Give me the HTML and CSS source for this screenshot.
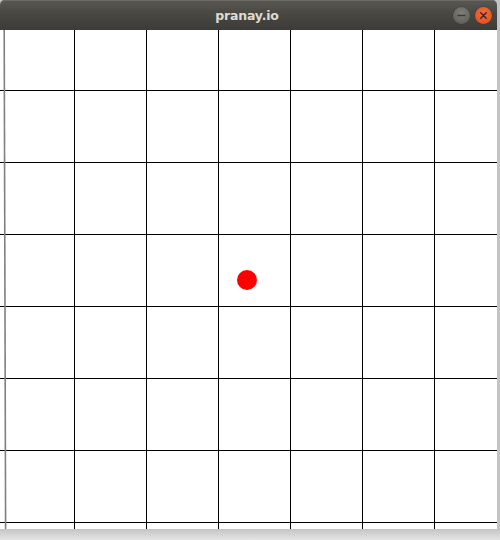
FILE: index.html
```html
<!DOCTYPE html>
<html>
<head>
<meta charset="utf-8">
<link rel="stylesheet" href="styles.css">
</head>
<body>
<div class="window">
  <div class="titlebar">
    <span class="title">pranay.io</span>
    <div class="buttons">
      <span class="btn btn-min"><svg width="17" height="17" viewBox="0 0 17 17"><line x1="4.5" y1="8.5" x2="12.5" y2="8.5" stroke="#3a3a38" stroke-width="1.4"/></svg></span>
      <span class="btn btn-close"><svg width="17" height="17" viewBox="0 0 17 17"><path d="M5.8 5.8 L11.2 11.2 M11.2 5.8 L5.8 11.2" stroke="#3a2a22" stroke-width="1.5" stroke-linecap="round"/></svg></span>
    </div>
  </div>
  <div class="canvas">
    <svg class="grid" width="497" height="499" viewBox="0 0 497 499">
      <g stroke="#000" stroke-width="1">
        <line x1="74.5" y1="0" x2="74.5" y2="499"/>
        <line x1="146.5" y1="0" x2="146.5" y2="499"/>
        <line x1="218.5" y1="0" x2="218.5" y2="499"/>
        <line x1="290.5" y1="0" x2="290.5" y2="499"/>
        <line x1="362.5" y1="0" x2="362.5" y2="499"/>
        <line x1="434.5" y1="0" x2="434.5" y2="499"/>
        <line x1="0" y1="60.5" x2="497" y2="60.5"/>
        <line x1="0" y1="132.5" x2="497" y2="132.5"/>
        <line x1="0" y1="204.5" x2="497" y2="204.5"/>
        <line x1="0" y1="276.5" x2="497" y2="276.5"/>
        <line x1="0" y1="348.5" x2="497" y2="348.5"/>
        <line x1="0" y1="420.5" x2="497" y2="420.5"/>
        <line x1="0" y1="492.5" x2="497" y2="492.5"/>
      </g>
      <line x1="4.2" y1="0" x2="5.6" y2="499" stroke="#808080" stroke-width="1.6"/>
      <circle cx="247" cy="250" r="10" fill="#ff0000"/>
    </svg>
  </div>
</div>
</body>
</html>
```
FILE: styles.css
```css
html, body {
  margin: 0;
  padding: 0;
}
body {
  width: 500px;
  height: 540px;
  overflow: hidden;
  background: linear-gradient(to bottom, #c4c4c4 0px, #c4c4c4 529px, #d6d6d6 535px, #e4e4e4 540px);
}
.window {
  width: 497px;
  display: flex;
  flex-direction: column;
}
.titlebar {
  height: 30px;
  display: flex;
  align-items: center;
  justify-content: center;
  position: relative;
  background: linear-gradient(to bottom, #595852 0%, #4a4944 40%, #3c3b37 100%);
  border-radius: 5px 5px 0 0;
  box-shadow: inset 0 1px 0 #6a6964;
}
.title {
  font-family: "DejaVu Sans", sans-serif;
  font-weight: bold;
  font-size: 12.5px;
  color: #dfdbd2;
  letter-spacing: -0.2px;
  margin-left: -3px;
}
.buttons {
  position: absolute;
  right: 5px;
  top: 7px;
  display: flex;
  gap: 5px;
}
.btn {
  width: 17px;
  height: 17px;
  border-radius: 50%;
  display: block;
}
.btn svg {
  display: block;
}
.btn-min {
  background: radial-gradient(circle at 50% 35%, #7d7d79 0%, #63635f 70%, #555551 100%);
  box-shadow: 0 0 0 0.5px #3a3935;
}
.btn-close {
  background: radial-gradient(circle at 50% 35%, #f36c3e 0%, #e9531f 70%, #d24615 100%);
  box-shadow: 0 0 0 0.5px #3a3935;
}
.canvas {
  height: 499px;
  background: #ffffff;
}
.grid {
  display: block;
}
```
